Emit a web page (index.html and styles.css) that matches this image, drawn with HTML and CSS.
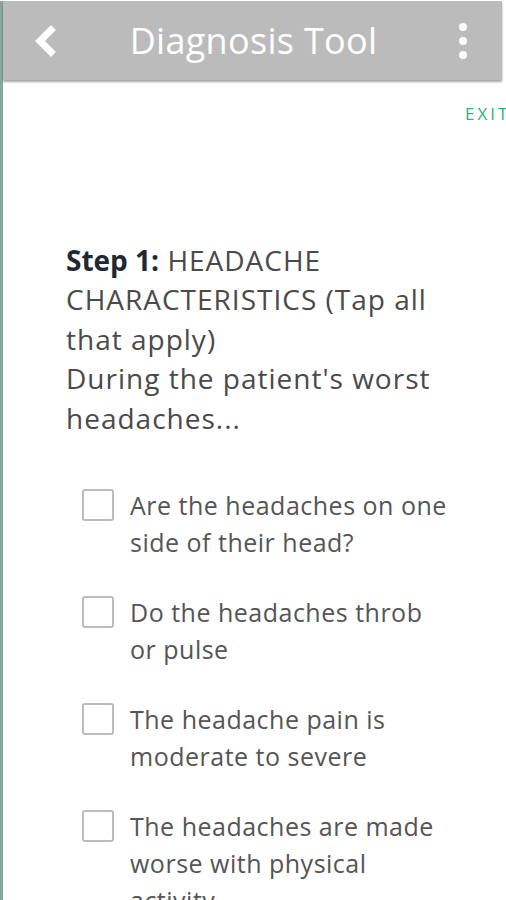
FILE: index.html
```html
<!DOCTYPE html>
<html>
<head>
<meta charset="utf-8">
<link rel="stylesheet" href="styles.css">
</head>
<body>
<div class="frame">
  <header class="appbar">
    <button class="icon-btn back" aria-label="Back">
      <svg width="24" height="32" viewBox="0 0 24 32"><path d="M18 5 L7 16 L18 27" fill="none" stroke="#fff" stroke-width="7" stroke-linecap="square" stroke-linejoin="miter"/></svg>
    </button>
    <h1 class="title">Diagnosis Tool</h1>
    <button class="icon-btn more" aria-label="More">
      <span class="dot"></span><span class="dot"></span><span class="dot"></span>
    </button>
  </header>
  <main class="content">
    <div class="exit-row"><span class="exit">EXIT</span></div>
    <p class="question"><strong>Step 1:</strong> HEADACHE CHARACTERISTICS (Tap all that apply)<br>During the patient's worst headaches...</p>
    <ul class="options">
      <li class="option"><span class="box"></span><span class="label">Are the headaches on one side of their head?</span></li>
      <li class="option"><span class="box"></span><span class="label">Do the headaches throb or pulse</span></li>
      <li class="option"><span class="box"></span><span class="label">The headache pain is moderate to severe</span></li>
      <li class="option"><span class="box"></span><span class="label">The headaches are made worse with physical activity</span></li>
    </ul>
  </main>
</div>
</body>
</html>
```
FILE: styles.css
```css
html, body {
  margin: 0;
  padding: 0;
  background: #ffffff;
  height: 900px;
  overflow: hidden;
}
.frame {
  border-left: 3px solid #8aa79d;
  height: 900px;
  font-family: "Open Sans", "Liberation Sans", sans-serif;
}
.appbar {
  width: 499px;
  height: 79px;
  margin-top: 1px;
  background: #bbbbbb;
  box-shadow: 0 2px 2px rgba(0,0,0,0.35);
  display: flex;
  align-items: center;
  position: relative;
  z-index: 1;
}
.icon-btn {
  background: none;
  border: 0;
  padding: 0;
  display: flex;
  align-items: center;
  justify-content: center;
}
.back {
  width: 24px;
  height: 32px;
  margin-left: 30px;
}
.title {
  flex: 1;
  margin: 0;
  text-align: center;
  color: #ffffff;
  font-weight: 400;
  font-size: 36px;
  letter-spacing: 0.3px;
  padding-right: 8px;
}
.more {
  flex-direction: column;
  gap: 6px;
  width: 10px;
  margin-right: 34px;
}
.dot {
  width: 8px;
  height: 8px;
  border-radius: 50%;
  background: #ffffff;
}
.content {
  padding: 23px 0 0 63px;
}
.exit-row {
  display: flex;
  justify-content: flex-end;
  height: 22px;
  overflow: hidden;
}
.exit {
  color: #2fb574;
  font-size: 17px;
  line-height: 22px;
  letter-spacing: 3px;
  width: 41px;
  overflow: hidden;
  white-space: nowrap;
}
.question {
  margin: 115.5px 0 0 0;
  width: 395px;
  font-size: 28px;
  line-height: 39.5px;
  letter-spacing: 1px;
  color: #4a4a4a;
}
.question strong {
  color: #222831;
  font-weight: 700;
  letter-spacing: 0;
}
.options {
  list-style: none;
  margin: 48.5px 0 0 0;
  padding: 0 0 0 16px;
  display: flex;
  flex-direction: column;
  gap: 33.3px;
}
.option {
  display: flex;
  gap: 16px;
  align-items: flex-start;
}
.box {
  flex: none;
  width: 28px;
  height: 28px;
  border: 2px solid #bcbcbc;
  border-radius: 3px;
  margin-top: 2px;
}
.label {
  font-size: 25px;
  line-height: 37px;
  letter-spacing: 0.5px;
  color: #555555;
  width: 322px;
}
```
